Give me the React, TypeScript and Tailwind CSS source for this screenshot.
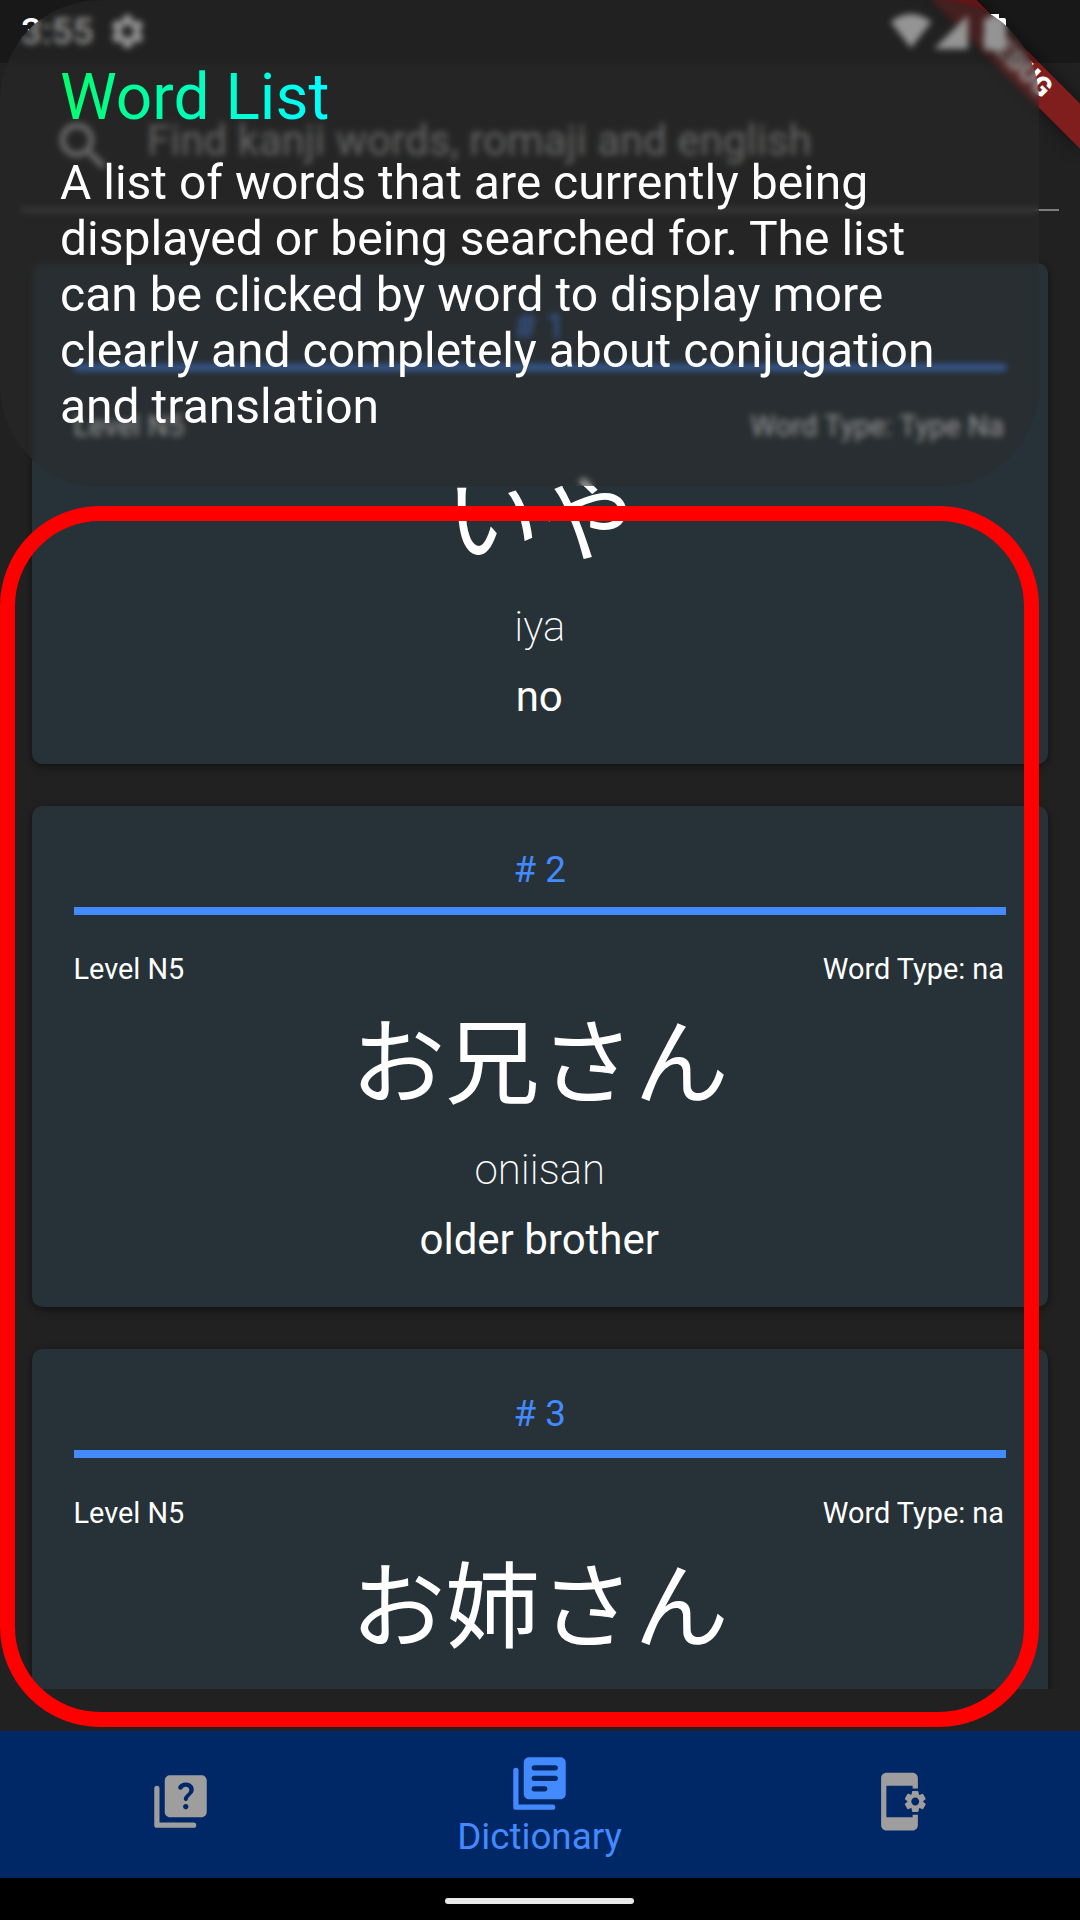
import React from "react";
import { MdAppSettingsAlt, MdSearch, MdSettings } from "react-icons/md";

type Word = {
  id: number;
  level: string;
  type: string;
  kanji: string;
  romaji?: string;
  english?: string;
};

const words: Word[] = [
  { id: 1, level: "N5", type: "Type Na", kanji: "いや", romaji: "iya", english: "no" },
  { id: 2, level: "N5", type: "na", kanji: "お兄さん", romaji: "oniisan", english: "older brother" },
  { id: 3, level: "N5", type: "na", kanji: "お姉さん" },
];

function QuizIcon() {
  return (
    <svg viewBox="0 0 24 24" className="size-[63px]" fill="currentColor">
      <path d="M3 7v14h14" fill="none" stroke="currentColor" strokeWidth="2" strokeLinecap="round" strokeLinejoin="round" />
      <path
        fillRule="evenodd"
        d="M8 2h12c1.1 0 2 .9 2 2v12c0 1.100-.9 2-2 2H8c-1.100 0-2-.9-2-2V4c0-1.100.9-2 2-2zM14.010 15c-.59 0-1.050-.47-1.050-1.050 0-.59.47-1.040 1.050-1.040.59 0 1.040.45 1.040 1.040-.01.58-.45 1.050-1.040 1.050zm2.500-6.170c-.63.93-1.230 1.210-1.560 1.810-.08.14-.13.26-.16.49-.05.39-.36.68-.75.68h-.03c-.44 0-.79-.38-.75-.82.03-.27.09-.57.25-.84.41-.73 1.180-1.160 1.630-1.800.48-.68.21-1.940-1.140-1.940-.61 0-1.010.32-1.260.7-.24.36-.68.53-1.080.34-.52-.22-.7-.86-.37-1.320.61-.87 1.530-1.350 2.710-1.350 1.320 0 2.240.61 2.700 1.360.38.64.61 1.840-.19 2.860z"
      />
    </svg>
  );
}

function LibraryIcon() {
  return (
    <svg viewBox="0 0 24 24" className="size-[63px]" fill="currentColor">
      <path d="M3 7v14h14" fill="none" stroke="currentColor" strokeWidth="2" strokeLinecap="round" strokeLinejoin="round" />
      <path
        fillRule="evenodd"
        d="M8 2h12c1.1 0 2 .9 2 2v12c0 1.100-.9 2-2 2H8c-1.100 0-2-.9-2-2V4c0-1.100.9-2 2-2zM10 5a1 1 0 0 0 0 2h8a1 1 0 0 0 0-2zM10 9a1 1 0 0 0 0 2h8a1 1 0 0 0 0-2zM10 13a1 1 0 0 0 0 2h4a1 1 0 0 0 0-2z"
      />
    </svg>
  );
}

function StatusBar() {
  return (
    <div className="absolute inset-x-0 top-0 flex h-[63px] items-center justify-between bg-black/25 pl-[21px] pr-[74px] text-white">
      <div className="flex items-center gap-[14px]">
        <span className="text-[36.75px] font-medium leading-[63px]">3:55</span>
        <MdSettings className="size-[41px]" />
      </div>
      <div className="flex items-center">
        <svg viewBox="0 0 42 36" className="h-[35px] w-[42px]" fill="currentColor">
          <path d="M0 8Q21-8 42 8L21 35z" />
        </svg>
        <svg viewBox="0 0 34 34" className="ml-[2px] size-[34px]" fill="currentColor">
          <path d="M34 0v34H0z" />
        </svg>
        <svg viewBox="0 0 22 36" className="ml-[16px] h-[36px] w-[22px]" fill="currentColor">
          <path d="M7 0h8v4h5q2 0 2 2v28q0 2-2 2H2q-2 0-2-2V6q0-2 2-2h5z" />
        </svg>
      </div>
    </div>
  );
}

function DebugBanner() {
  return (
    <div className="absolute left-[911.9px] top-[47.35px] flex h-[31.5px] w-[210px] rotate-45 items-center justify-center bg-[#b71c1c]/63 text-[26.8px] font-black leading-none text-white shadow-[0_0_16px_rgba(0,0,0,0.5)]">
      DEBUG
    </div>
  );
}

function WordCard({ word }: { word: Word }) {
  return (
    <article className="flex h-[501.35px] shrink-0 flex-col rounded-[10.5px] bg-[#263238] px-[42px] pt-[42.3px] text-center text-white shadow-[0_3px_8px_rgba(0,0,0,0.45)]">
      <h3 className="h-[43px] text-[36.75px] leading-[43px] text-[#448aff]"># {word.id}</h3>
      <div className="mt-[15.6px] h-[7.9px] shrink-0 bg-[#448aff]" />
      <div className="mt-[39.4px] flex h-[31px] justify-between text-[28.875px] leading-[31px]">
        <span>Level {word.level}</span>
        <span className="pr-[2px]">Word Type: {word.type}</span>
      </div>
      <p className="mt-[25px] h-[95px] font-['Noto_Sans_CJK_JP',sans-serif] text-[94.5px] leading-[92px]">{word.kanji}</p>
      {word.romaji && <p className="mt-[40px] h-[49px] text-[42px] font-extralight leading-[49px]">{word.romaji}</p>}
      {word.english && <p className="mt-[21px] h-[49px] pr-px text-[42px] leading-[49px]">{word.english}</p>}
    </article>
  );
}

function BottomNav() {
  return (
    <nav className="grid h-[147px] shrink-0 grid-cols-3 bg-[#002766] text-[#9e9e9e]">
      <div className="flex items-center justify-center pb-[6px]">
        <QuizIcon />
      </div>
      <div className="flex flex-col items-center pr-px pt-[21px] text-[#448aff]">
        <LibraryIcon />
        <span className="text-[36.75px] leading-[43px]">Dictionary</span>
      </div>
      <div className="flex items-center justify-center pb-[6px] pr-px">
        <MdAppSettingsAlt className="size-[63px]" />
      </div>
    </nav>
  );
}

export default function App() {
  return (
    <div className="relative flex h-[1920px] w-[1080px] flex-col overflow-hidden bg-[#212121] font-['Roboto','Noto_Sans_CJK_JP',sans-serif]">
      <header className="mx-[21px] mt-[63px] flex h-[148px] shrink-0 items-start border-b-2 border-[#7d7d7d] pl-[31px] pt-[52px]">
        <MdSearch className="size-[63px] text-[#b4b4b4]" />
        <span className="ml-[32px] text-[42px] leading-[51px] text-[#a0a0a0]">Find kanji words, romaji and english</span>
      </header>
      <main className="flex h-[1478px] shrink-0 flex-col gap-[42px] overflow-hidden pl-[31.5px] pr-[32px] pt-[51.7px]">
        {words.map((w) => (
          <WordCard key={w.id} word={w} />
        ))}
      </main>
      <div className="h-[42px] shrink-0" />
      <BottomNav />
      <div className="flex h-[42px] shrink-0 justify-center bg-black pr-[2px] pt-[20px]">
        <div className="h-[6px] w-[189px] rounded-full bg-[#e8e8e8]" />
      </div>

      <DebugBanner />
      <StatusBar />

      <div className="absolute left-0 top-[506px] h-[1221px] w-[1039px] rounded-[100px] border-[15px] border-[#ff0000]" />
      <section className="absolute left-0 top-0 h-[486px] w-[1039px] rounded-[100px] bg-[#292929]/50 pl-[60px] pt-[60px] backdrop-blur-[3px]">
        <h1 className="w-fit bg-linear-to-r from-[#00ff6a] to-[#00ffff] bg-clip-text text-[64px] leading-[75px] text-transparent">Word List</h1>
        <p className="mt-[20px] w-[920px] text-[48px] leading-[56px] text-white">
          A list of words that are currently being displayed or being searched for. The list can be clicked by word to display more clearly and completely about conjugation and translation
        </p>
      </section>
    </div>
  );
}
